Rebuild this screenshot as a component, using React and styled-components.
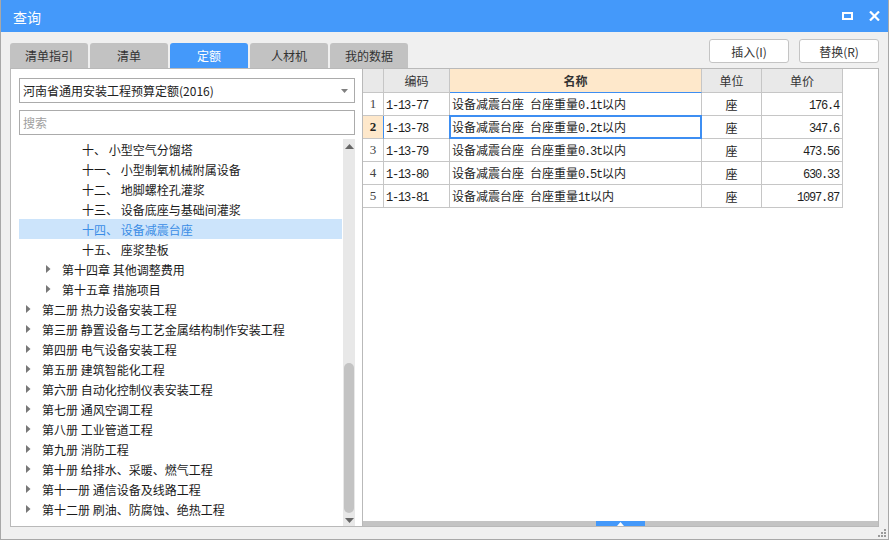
import React from 'react';
import styled, { createGlobalStyle } from 'styled-components';

const Global = createGlobalStyle`
  html, body { margin: 0; padding: 0; background: #ffffff; }
  body { font-family: "Noto Sans CJK SC", "Noto Sans", sans-serif; color: #222; }
  * { box-sizing: border-box; }
`;

const BLUE = '#4499fa';
const CJK = '"Noto Sans CJK SC", "Noto Sans", sans-serif';

const Window = styled.div`
  position: relative;
  width: 889px;
  height: 540px;
  background: #f0f0f0;
  border: 1px solid #a8a8a8;
  border-top: none;
  display: flex;
  flex-direction: column;
  overflow: hidden;
`;

const TitleBar = styled.div`
  height: 32px;
  flex: none;
  background: ${BLUE};
  display: flex;
  align-items: center;
  padding: 0 8px 0 12px;
  color: #fff;
`;

const Title = styled.div`
  flex: 1;
  font-size: 14px;
  font-family: ${CJK};
  line-height: 1;
  padding-top: 1px;
`;

const WinButtons = styled.div`
  display: flex;
  align-items: center;
  gap: 16px;
`;

const Body = styled.div`
  flex: 1;
  display: flex;
  flex-direction: column;
  padding: 7px 9px 12px 9px;
`;

const HeaderRow = styled.div`
  height: 29px;
  display: flex;
  justify-content: space-between;
`;

const Tabs = styled.div`
  align-self: flex-end;
  display: flex;
  gap: 2px;
`;

const Tab = styled.div`
  width: 78px;
  height: 25px;
  border-radius: 3px 3px 0 0;
  background: ${p => (p.$active ? BLUE : '#c2c2c2')};
  color: ${p => (p.$active ? '#fff' : '#333')};
  font-size: 12px;
  display: flex;
  align-items: center;
  justify-content: center;
`;

const Buttons = styled.div`
  align-self: flex-start;
  display: flex;
  gap: 10px;
`;

const Button = styled.div`
  width: 80px;
  height: 24px;
  background: #fff;
  border: 1px solid #c4c4c4;
  border-radius: 3px;
  font-size: 12px;
  color: #333;
  display: flex;
  align-items: center;
  justify-content: center;
`;

const Panels = styled.div`
  flex: 1;
  display: flex;
  min-height: 0;
`;

const LeftPanel = styled.div`
  width: 352px;
  flex: none;
  background: #fff;
  border: 1px solid #b9b9b9;
  border-right: none;
  padding: 9px 6px 0 8px;
  display: flex;
  flex-direction: column;
`;

const Select = styled.div`
  width: 336px;
  height: 25px;
  border: 1px solid #ababab;
  display: flex;
  align-items: center;
  padding: 0 6px 0 3px;
  font-size: 12px;
  color: #222;
`;

const SelectText = styled.div`
  flex: 1;
`;

const Search = styled.div`
  width: 336px;
  height: 25px;
  margin-top: 7px;
  border: 1px solid #ababab;
  display: flex;
  align-items: center;
  padding: 0 3px;
  font-size: 12px;
  color: #a0a0a0;
`;

const Tree = styled.div`
  flex: 1;
  margin-top: 4px;
  width: 336px;
  display: flex;
  min-height: 0;
`;

const TreeList = styled.div`
  flex: 1;
  padding-right: 1px;
  overflow: hidden;
`;

const TreeRow = styled.div`
  height: 20px;
  display: flex;
  align-items: center;
  padding-left: ${p => 5 + p.$level * 20}px;
  background: ${p => (p.$selected ? '#cce4fb' : 'transparent')};
  color: ${p => (p.$selected ? '#3a8de6' : '#1a1a1a')};
  font-size: 12px;
  white-space: nowrap;
`;

const Caret = styled.div`
  width: 18px;
  flex: none;
  display: flex;
  align-items: center;
  padding-left: 2px;
`;

const Scrollbar = styled.div`
  width: 12px;
  flex: none;
  background: #e8e8e8;
  display: flex;
  flex-direction: column;
  align-items: center;
`;

const ScrollArrow = styled.div`
  height: ${p => p.$h}px;
  width: 100%;
  flex: none;
  display: flex;
  justify-content: center;
  align-items: ${p => (p.$down ? 'flex-start' : 'center')};
  padding-top: ${p => (p.$down ? '5px' : '0')};
`;

const ScrollTrack = styled.div`
  flex: 1;
  width: 100%;
  display: flex;
  flex-direction: column;
  align-items: center;
`;

const Thumb = styled.div`
  width: 10px;
  border-radius: 5px;
  background: #c3c3c3;
`;

const RightPanel = styled.div`
  flex: 1;
  background: #fff;
  border: 1px solid #b9b9b9;
  display: flex;
  flex-direction: column;
`;

const Grid = styled.table`
  border-collapse: separate;
  border-spacing: 0;
  table-layout: fixed;
  width: 480px;
  font-size: 12px;
`;

const Th = styled.th`
  height: 24px;
  padding: 0;
  font-weight: ${p => (p.$active ? 700 : 400)};
  font-size: 12px;
  color: #333;
  background: ${p => (p.$active ? '#fee8cb' : '#e9e9e9')};
  border-right: 1px solid #c6c6c6;
  border-bottom: 1px solid ${p => (p.$active ? '#3d8ef2' : '#c6c6c6')};
  text-align: center;
`;

const Td = styled.td`
  position: relative;
  height: 23px;
  padding: 0 ${p => (p.$align === 'right' ? '3px' : '2px')} 0 2px;
  border-right: 1px solid #c6c6c6;
  border-bottom: 1px solid #c6c6c6;
  text-align: ${p => p.$align || 'left'};
  white-space: nowrap;
  overflow: visible;
  color: #1e1e1e;
  &::after {
    content: '';
    display: ${p => (p.$focus ? 'block' : 'none')};
    position: absolute;
    top: -1px;
    left: -1px;
    right: -1px;
    bottom: -1px;
    border: 2px solid #3d8ef2;
  }
`;

const IdxTd = styled.td`
  height: 23px;
  padding: 0;
  text-align: center;
  font-family: "Liberation Serif", serif;
  font-size: 13px;
  font-weight: ${p => (p.$active ? 700 : 400)};
  color: ${p => (p.$active ? '#222' : '#444')};
  background: ${p => (p.$active ? '#fee8cb' : '#fff')};
  border-right: 1px solid ${p => (p.$active ? '#3d8ef2' : '#c6c6c6')};
  border-bottom: 1px solid #c6c6c6;
`;

const Mono = styled.span`
  font-family: "Liberation Mono", monospace;
  font-size: 12px;
  letter-spacing: -1.2px;
`;

const Spacer = styled.div`
  flex: 1;
`;

const CollapseBar = styled.div`
  height: 5px;
  background: #c4c4c4;
  display: flex;
  justify-content: center;
`;

const CollapseHandle = styled.div`
  width: 49px;
  height: 5px;
  background: ${BLUE};
  display: flex;
  justify-content: center;
  align-items: center;
`;

const Grip = styled.svg`
  position: absolute;
  right: 1px;
  bottom: 1px;
`;

const Mixed = ({ text }) =>
  text.split(/([\x20-\x7e]+)/).map((part, i) =>
    /^[\x20-\x7e]+$/.test(part) ? <Mono key={i}>{part}</Mono> : part ? <span key={i}>{part}</span> : null
  );

const RightTri = () => (
  <svg width="5" height="8" viewBox="0 0 5 8"><path d="M0 0 L4.5 4 L0 8 Z" fill="#777" /></svg>
);

const tree = [
  { level: 2, text: '十、 小型空气分馏塔' },
  { level: 2, text: '十一、 小型制氧机械附属设备' },
  { level: 2, text: '十二、 地脚螺栓孔灌浆' },
  { level: 2, text: '十三、 设备底座与基础间灌浆' },
  { level: 2, text: '十四、 设备减震台座', selected: true },
  { level: 2, text: '十五、 座浆垫板' },
  { level: 1, text: '第十四章 其他调整费用', caret: true },
  { level: 1, text: '第十五章 措施项目', caret: true },
  { level: 0, text: '第二册 热力设备安装工程', caret: true },
  { level: 0, text: '第三册 静置设备与工艺金属结构制作安装工程', caret: true },
  { level: 0, text: '第四册 电气设备安装工程', caret: true },
  { level: 0, text: '第五册 建筑智能化工程', caret: true },
  { level: 0, text: '第六册 自动化控制仪表安装工程', caret: true },
  { level: 0, text: '第七册 通风空调工程', caret: true },
  { level: 0, text: '第八册 工业管道工程', caret: true },
  { level: 0, text: '第九册 消防工程', caret: true },
  { level: 0, text: '第十册 给排水、采暖、燃气工程', caret: true },
  { level: 0, text: '第十一册 通信设备及线路工程', caret: true },
  { level: 0, text: '第十二册 刷油、防腐蚀、绝热工程', caret: true },
];

const rows = [
  { code: '1-13-77', name: '设备减震台座 台座重量0.1t以内', unit: '座', price: '176.4' },
  { code: '1-13-78', name: '设备减震台座 台座重量0.2t以内', unit: '座', price: '347.6' },
  { code: '1-13-79', name: '设备减震台座 台座重量0.3t以内', unit: '座', price: '473.56' },
  { code: '1-13-80', name: '设备减震台座 台座重量0.5t以内', unit: '座', price: '630.33' },
  { code: '1-13-81', name: '设备减震台座 台座重量1t以内', unit: '座', price: '1097.87' },
];

const tabs = ['清单指引', '清单', '定额', '人材机', '我的数据'];

export default function App() {
  return (
    <>
      <Global />
      <Window>
        <TitleBar>
          <Title>查询</Title>
          <WinButtons>
            <svg width="11" height="8" viewBox="0 0 11 8">
              <rect x="1" y="1" width="9" height="6" fill="none" stroke="#fff" strokeWidth="2" />
            </svg>
            <svg width="11" height="10" viewBox="0 0 11 10">
              <path d="M1 0.5 L10 9.5 M10 0.5 L1 9.5" stroke="#fff" strokeWidth="2.2" />
            </svg>
          </WinButtons>
        </TitleBar>
        <Body>
          <HeaderRow>
            <Tabs>
              {tabs.map(t => (
                <Tab key={t} $active={t === '定额'}>{t}</Tab>
              ))}
            </Tabs>
            <Buttons>
              <Button>插入(I)</Button>
              <Button>替换(R)</Button>
            </Buttons>
          </HeaderRow>
          <Panels>
            <LeftPanel>
              <Select>
                <SelectText>河南省通用安装工程预算定额(2016)</SelectText>
                <svg width="7" height="4" viewBox="0 0 7 4"><path d="M0 0 H7 L3.5 4 Z" fill="#808080" /></svg>
              </Select>
              <Search>搜索</Search>
              <Tree>
                <TreeList>
                  {tree.map(item => (
                    <TreeRow key={item.text} $level={item.level} $selected={item.selected}>
                      <Caret>{item.caret ? <RightTri /> : null}</Caret>
                      {item.text}
                    </TreeRow>
                  ))}
                </TreeList>
                <Scrollbar>
                  <ScrollArrow $h={14}>
                    <svg width="9" height="5" viewBox="0 0 9 5"><path d="M0 5 L4.5 0 L9 5 Z" fill="#666" /></svg>
                  </ScrollArrow>
                  <ScrollTrack>
                    <Thumb style={{ marginTop: 210, height: 150 }} />
                  </ScrollTrack>
                  <ScrollArrow $h={13} $down>
                    <svg width="9" height="5" viewBox="0 0 9 5"><path d="M0 0 L9 0 L4.5 5 Z" fill="#666" /></svg>
                  </ScrollArrow>
                </Scrollbar>
              </Tree>
            </LeftPanel>
            <RightPanel>
              <Grid>
                <colgroup>
                  <col style={{ width: 21 }} />
                  <col style={{ width: 66 }} />
                  <col style={{ width: 252 }} />
                  <col style={{ width: 60 }} />
                  <col style={{ width: 81 }} />
                </colgroup>
                <thead>
                  <tr>
                    <Th />
                    <Th>编码</Th>
                    <Th $active>名称</Th>
                    <Th>单位</Th>
                    <Th>单价</Th>
                  </tr>
                </thead>
                <tbody>
                  {rows.map((r, i) => (
                    <tr key={r.code}>
                      <IdxTd $active={i === 1}>{i + 1}</IdxTd>
                      <Td><Mixed text={r.code} /></Td>
                      <Td $focus={i === 1}><Mixed text={r.name} /></Td>
                      <Td $align="center">{r.unit}</Td>
                      <Td $align="right"><Mixed text={r.price} /></Td>
                    </tr>
                  ))}
                </tbody>
              </Grid>
              <Spacer />
              <CollapseBar>
                <CollapseHandle>
                  <svg width="7" height="4" viewBox="0 0 7 4"><path d="M0 4 L3.5 0 L7 4 Z" fill="#fff" /></svg>
                </CollapseHandle>
              </CollapseBar>
            </RightPanel>
          </Panels>
        </Body>
        <Grip width="9" height="9" viewBox="0 0 9 9">
          <rect x="6" y="0" width="2" height="2" fill="#9a9a9a" />
          <rect x="3" y="3" width="2" height="2" fill="#9a9a9a" />
          <rect x="6" y="3" width="2" height="2" fill="#9a9a9a" />
          <rect x="0" y="6" width="2" height="2" fill="#9a9a9a" />
          <rect x="3" y="6" width="2" height="2" fill="#9a9a9a" />
          <rect x="6" y="6" width="2" height="2" fill="#9a9a9a" />
        </Grip>
      </Window>
    </>
  );
}
